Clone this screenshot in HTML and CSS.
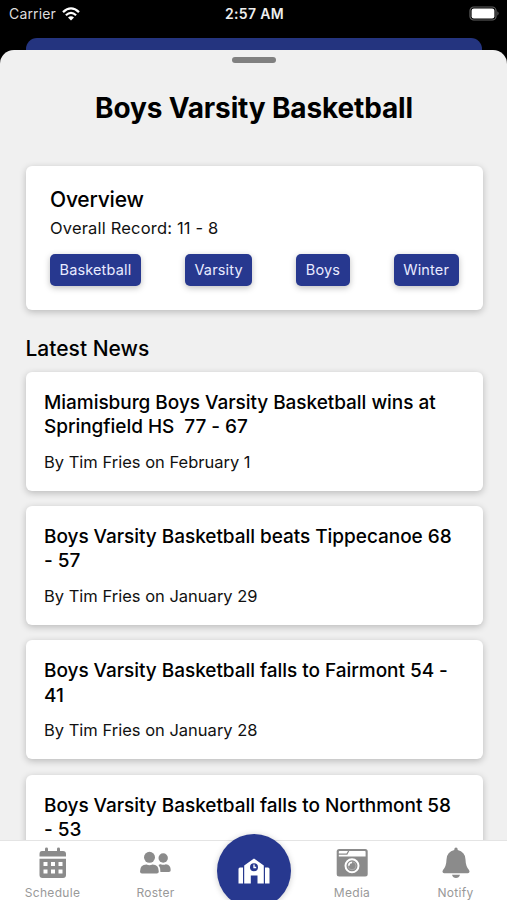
FILE: index.html
```html
<!DOCTYPE html>
<html lang="en">
<head>
    <meta charset="UTF-8">
    <meta name="viewport" content="width=device-width, initial-scale=1.0">
    <title>Boys Varsity Basketball</title>
    <link rel="stylesheet" href="styles.css">
</head>
<body>
    <div class="phone">
        <header class="status-bar">
            <div class="carrier">
                <span>Carrier</span>
                <svg class="wifi" viewBox="0 0 18 14" width="18" height="14">
                    <path d="M1 5.2 Q9 -2.4 17 5.2" fill="none" stroke="#fff" stroke-width="2.3"/>
                    <path d="M3.9 8.2 Q9 3.4 14.1 8.2" fill="none" stroke="#fff" stroke-width="2.2"/>
                    <path d="M9 13.6 L6 10.6 Q9 8 12 10.6 Z" fill="#fff"/>
                </svg>
            </div>
            <div class="time">2:57 AM</div>
            <div class="power">
                <svg viewBox="0 0 31 15" width="31" height="15">
                    <rect x="1" y="1" width="26" height="13" rx="3.8" fill="none" stroke="#626262" stroke-width="1.2"/>
                    <rect x="2.6" y="2.6" width="22.8" height="9.8" rx="2.2" fill="#fff"/>
                    <path d="M28.4 5.3 Q30.8 7.5 28.4 9.7 Z" fill="#626262"/>
                </svg>
            </div>
        </header>
        <div class="back-sheet"></div>
        <main class="sheet">
            <div class="handle"></div>
            <h1>Boys Varsity Basketball</h1>
            <section class="card overview">
                <h2>Overview</h2>
                <p>Overall Record: 11 - 8</p>
                <div class="tags">
                    <span class="tag">Basketball</span>
                    <span class="tag">Varsity</span>
                    <span class="tag">Boys</span>
                    <span class="tag">Winter</span>
                </div>
            </section>
            <h2 class="news-title">Latest News</h2>
            <article class="card news">
                <h3>Miamisburg Boys Varsity Basketball wins at<br>Springfield HS&nbsp; 77 - 67</h3>
                <p>By Tim Fries on February 1</p>
            </article>
            <article class="card news">
                <h3>Boys Varsity Basketball beats Tippecanoe 68<br>- 57</h3>
                <p>By Tim Fries on January 29</p>
            </article>
            <article class="card news">
                <h3>Boys Varsity Basketball falls to Fairmont 54 -<br>41</h3>
                <p>By Tim Fries on January 28</p>
            </article>
            <article class="card news">
                <h3>Boys Varsity Basketball falls to Northmont 58<br>- 53</h3>
            </article>
        </main>
        <nav class="tab-bar">
            <a class="tab">
                <svg viewBox="0 0 28 32" width="28" height="32">
                    <path d="M3 4h3V2q0-1.400 1.500-1.400T9 2v2h9V2q0-1.400 1.500-1.400T21 2v2h3q3 0 3 3v2.500H.5V7q0-3 2.500-3z" fill="#8b8b8b"/>
                    <path fill-rule="evenodd" d="M.5 11.700H27V28q0 3-3 3H3.500q-3 0-3-3zM4.500 15v4h4v-4zM12 15v4h4v-4zM19.500 15v4h4v-4zM4.500 22.500v4h4v-4zM12 22.500v4h4v-4zM19.500 22.500v4h4v-4z" fill="#8b8b8b"/>
                </svg>
                <span>Schedule</span>
            </a>
            <a class="tab">
                <svg viewBox="0 0 32 32" width="32" height="32">
                    <g fill="#8b8b8b">
                        <circle cx="10.500" cy="10.300" r="5.500"/>
                        <circle cx="24.200" cy="11" r="4.700"/>
                        <path d="M1 24.500q0-7 6.500-7 3 1.400 6 0 6.300 0 6.300 7 0 2-2 2H3q-2 0-2-2z"/>
                        <path d="M19.500 18q1-.9 2.200-.8 2.700 1.200 5.200 0 4.800.3 4.800 6 0 1.800-1.800 1.800h-8.500q.3-4.500-1.900-7z"/>
                    </g>
                </svg>
                <span>Roster</span>
            </a>
            <a class="home">
                <svg viewBox="0 0 32 26" width="32" height="26">
                    <path fill-rule="evenodd" d="M6.200 25.500V7.500L16 .5l9.800 7v18h-6.300v-8h-6.700v8z" fill="#fff"/>
                    <path d="M.5 11q0-1.500 1.500-1.500h3v16H.5zM27 9.500h3q1.500 0 1.500 1.500v14.500H27z" fill="#fff"/>
                    <circle cx="16" cy="9.200" r="4" fill="#27388f"/>
                    <path d="M16 6.500v3h2.200" fill="none" stroke="#fff" stroke-width="1.300"/>
                </svg>
            </a>
            <a class="tab">
                <svg viewBox="0 0 32 32" width="32" height="32">
                    <rect x=".7" y="2" width="31" height="27.500" rx="2.500" fill="#8b8b8b"/>
                    <path d="M2.800 4.800q0-.8.800-.8h8.400l-1.500 2.500H2.800zM2.800 7.800h8.500l2-3.800h15.500q.8 0 .8.800v4.700H2.800z" fill="#fff"/>
                    <circle cx="16" cy="18.800" r="6.500" fill="none" stroke="#fff" stroke-width="2"/>
                    <circle cx="16" cy="18.800" r="4" fill="none" stroke="#b4b4b4" stroke-width=".8"/>
                    <path d="M12.800 18.800q0-3.200 3.200-3.200" fill="none" stroke="#fff" stroke-width="1.500"/>
                </svg>
                <span>Media</span>
            </a>
            <a class="tab">
                <svg viewBox="0 0 28 32" width="28" height="32">
                    <path d="M12.300 2.600q0-2 1.700-2t1.700 2v.5q7.300 1.600 7.800 9.300.2 7 3.500 10.500 1 1.500.2 2.500-.4.800-1.500.8H2.300q-1.100 0-1.500-.8-.8-1 .2-2.500 3.300-3.500 3.500-10.500.5-7.700 7.800-9.300zM10 27.700h8q-1 3.300-4 3.300t-4-3.300z" fill="#8b8b8b"/>
                </svg>
                <span>Notify</span>
            </a>
        </nav>
    </div>
</body>
</html>
```
FILE: styles.css
```css
* {
    box-sizing: border-box;
}
body {
    margin: 0;
    font-family: Inter, "Liberation Sans", sans-serif;
    background: #000;
    color: #000;
}
h1, h2, h3, p {
    margin: 0;
}
.phone {
    display: flex;
    flex-direction: column;
    width: 507px;
    height: 900px;
    overflow: hidden;
}
.status-bar {
    display: grid;
    grid-template-columns: 1fr auto 1fr;
    align-items: center;
    flex: none;
    height: 38px;
    padding: 0 7px 11px 9px;
    color: #fff;
    font-size: 14px;
}
.carrier {
    display: flex;
    align-items: center;
    gap: 6px;
    color: #ddd;
    letter-spacing: 0.15px;
}
.time {
    font-weight: 600;
    color: #eee;
    letter-spacing: 0.35px;
}
.power {
    display: flex;
    justify-content: flex-end;
}
.back-sheet {
    flex: none;
    height: 12px;
    margin: 0 25px 0 26px;
    border-radius: 11px 11px 0 0;
    background: #24347f;
}
.sheet {
    flex: 1;
    min-height: 0;
    overflow: hidden;
    padding: 7px 24.500px 0 25.500px;
    border-radius: 14px 14px 0 0;
    background: #f0f0f0;
}
.handle {
    width: 44px;
    height: 6px;
    margin: 0 auto;
    border-radius: 3px;
    background: #808080;
}
h1 {
    margin-top: 27px;
    font-size: 28px;
    line-height: 36px;
    font-weight: 700;
    text-align: center;
    white-space: nowrap;
    letter-spacing: -0.15px;
}
.card {
    border-radius: 6px;
    background: #fff;
    box-shadow: 0 2px 7px rgba(0, 0, 0, 0.23);
}
.overview {
    height: 144px;
    margin-top: 40px;
    padding: 20px 24px 0 24.500px;
}
h2 {
    font-size: 21px;
    line-height: 28px;
    font-weight: 500;
}
.overview h2 {
    letter-spacing: -0.2px;
}
.overview p {
    margin-top: 3px;
    font-size: 16.500px;
    line-height: 22px;
    letter-spacing: 0.18px;
    color: #111;
}
.tags {
    display: flex;
    justify-content: space-between;
    margin-top: 15px;
}
.tag {
    height: 32px;
    padding: 0 9.500px;
    border-radius: 5px;
    background: #27388f;
    box-shadow: 0 2px 6px rgba(0, 0, 0, 0.25);
    color: #e9ebff;
    font-size: 14.500px;
    line-height: 32px;
    letter-spacing: 0.15px;
}
.news-title {
    margin: 25px 0 8.500px;
}
.news {
    height: 119px;
    margin-bottom: 15.400px;
    padding: 19px 18px 0 18.500px;
    white-space: nowrap;
}
.news h3 {
    font-size: 19px;
    line-height: 24.500px;
    font-weight: 500;
    letter-spacing: -0.04px;
}
.news p {
    margin-top: 11px;
    font-size: 16.500px;
    line-height: 22px;
    color: #111;
}
.tab-bar {
    display: grid;
    grid-template-columns: 105px 101px 96px 100px 107px;
    justify-items: center;
    flex: none;
    height: 60px;
    border-top: 1px solid #e4e4e4;
    background: #fff;
}
.tab {
    display: flex;
    flex-direction: column;
    align-items: center;
    padding-top: 6px;
    color: #999;
    font-size: 12px;
    line-height: 16px;
    letter-spacing: 0.3px;
}
.tab span {
    margin-top: 5.500px;
}
.home {
    display: flex;
    align-items: center;
    justify-content: center;
    width: 74px;
    height: 74px;
    margin-top: -7px;
    padding-bottom: 1px;
    border-radius: 50%;
    background: #27388f;
    box-shadow: 0 1px 6px rgba(0, 0, 0, 0.2);
}
```
